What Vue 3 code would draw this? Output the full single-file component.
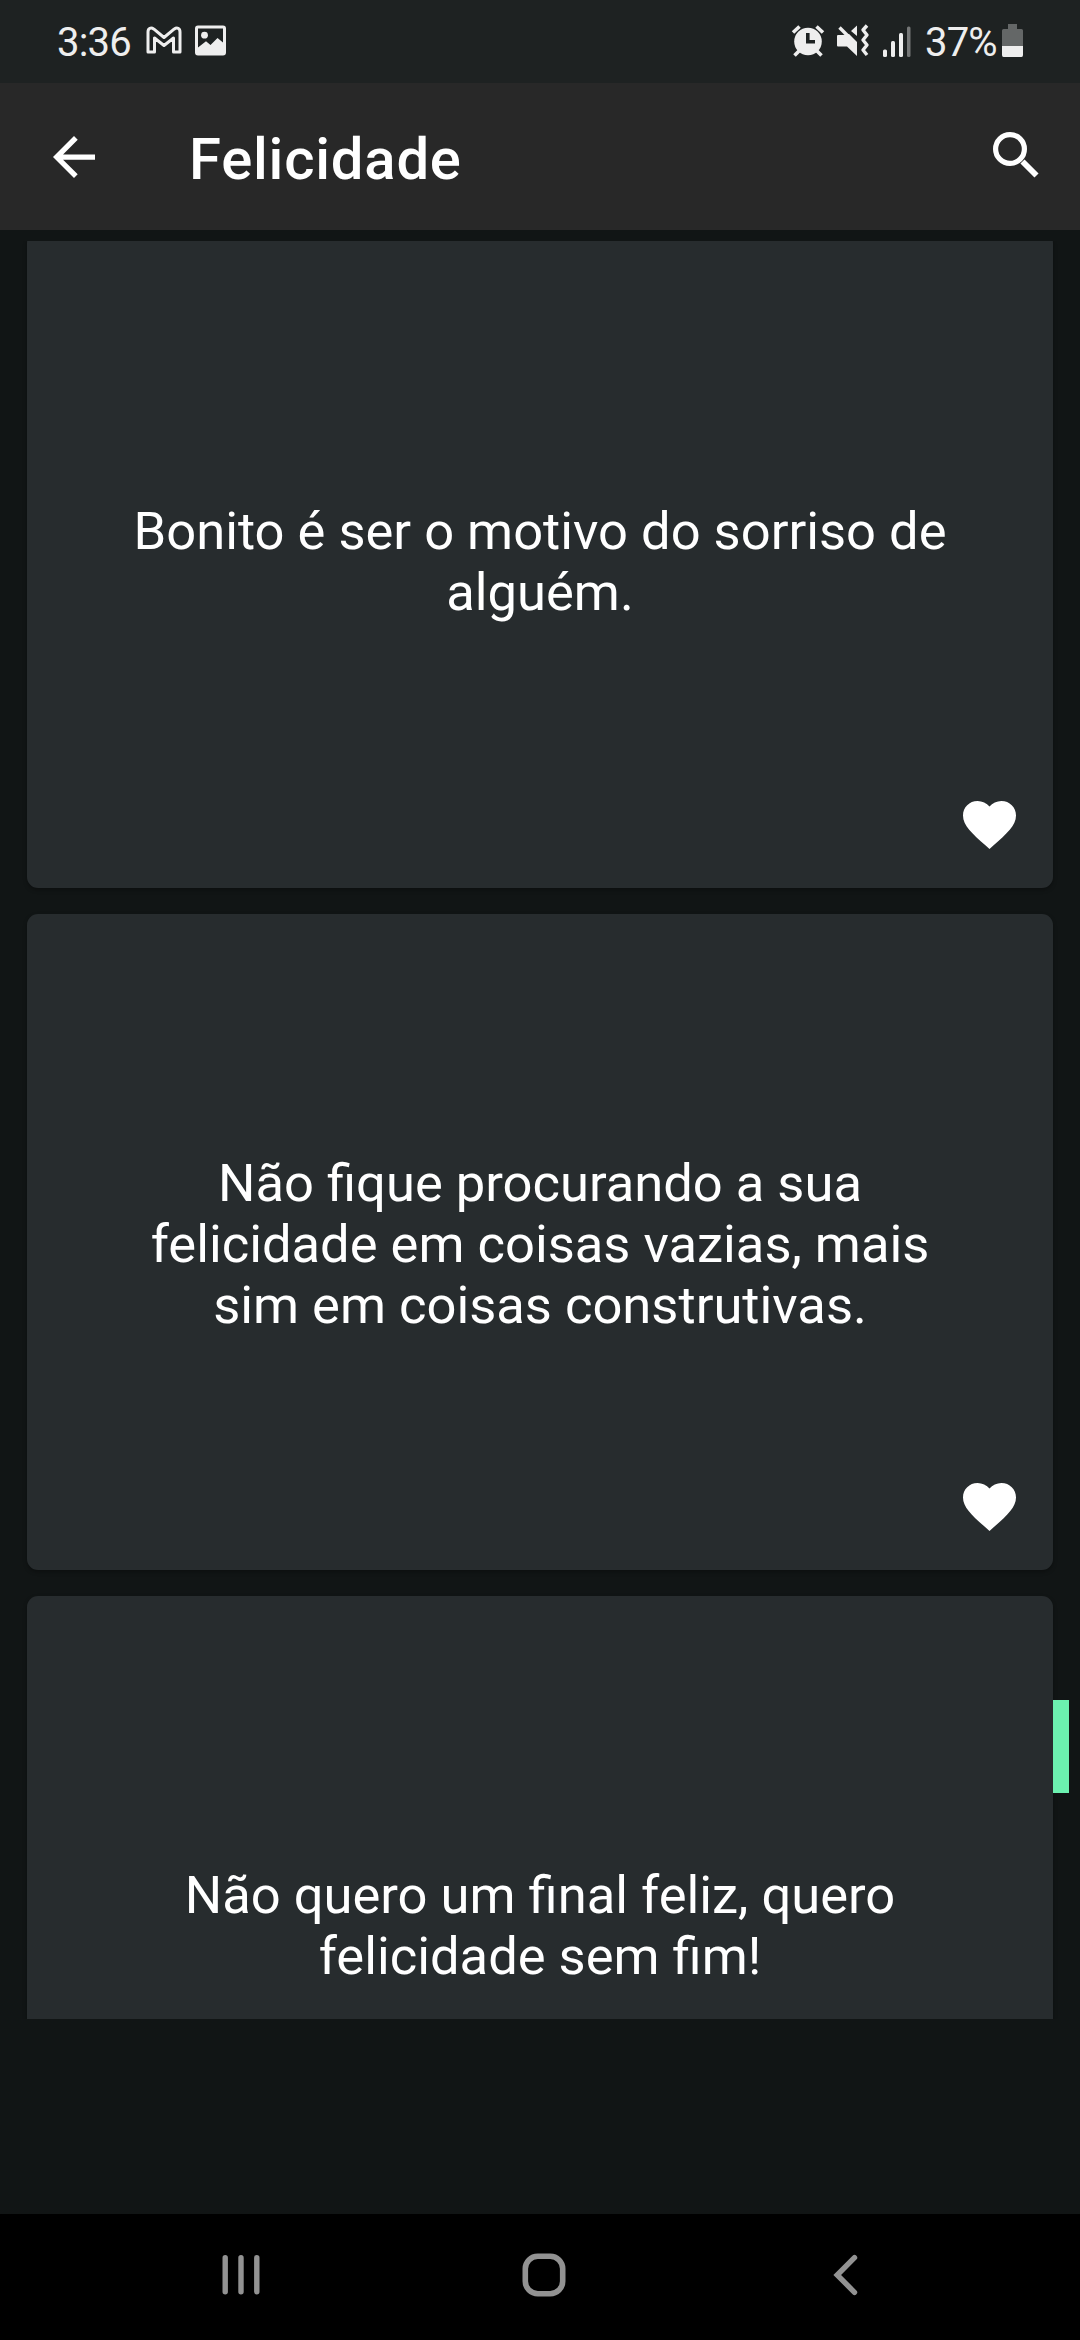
<script setup>
const quotes = [
  'Bonito é ser o motivo do sorriso de alguém.',
  'Não fique procurando a sua felicidade em coisas vazias, mais sim em coisas construtivas.',
  'Não quero um final feliz, quero felicidade sem fim!',
]
</script>

<template>
  <div class="screen">
    <header class="status">
      <div class="status-left">
        <span class="clock">3:36</span>
        <svg class="gmail" width="36" height="28" viewBox="0 0 36 28" fill="none" stroke="#eee" stroke-width="3" stroke-linejoin="round">
          <path d="M2 26V6C2 2 5 1 8 3.2L18 11.5L28 3.2C31 1 34 2 34 6V26H27.5V12L18 19.5L8.5 12V26Z" />
        </svg>
        <svg class="photo" width="32" height="32" viewBox="0 0 32 32">
          <path fill="#eee" fill-rule="evenodd" d="M3 .5H28Q31 .5 31 3.5V27.500Q31 30.500 28 30.500H3Q0 30.500 0 27.500V3.500Q0 .5 3 .5ZM3 3.500V22.500L11 16.300L15.500 20L22.500 13L28 17.500V3.500Z" />
          <circle cx="9.500" cy="10.200" r="3.400" fill="#eee" />
        </svg>
      </div>
      <div class="status-right">
        <svg class="alarm" width="34" height="34" viewBox="0 0 34 34">
          <g stroke="#eee" stroke-width="3.600" fill="none">
            <path d="M2 8.500L8.500 2.500M25.500 2.500L32 8.500M8 27L3.500 31.500M26 27L30.500 31.500" />
          </g>
          <circle cx="17" cy="17.500" r="13.800" fill="#eee" />
          <path d="M16.800 9V17.800H24" fill="none" stroke="#1e2222" stroke-width="3.600" />
        </svg>
        <svg class="mute" width="34" height="34" viewBox="0 0 34 34">
          <path fill="#eee" d="M2 11H7L13 10L21 18V32L11 22.500H2Q1 22.500 1 21.500V12Q1 11 2 11ZM21 1.500V12L15 7Z" />
          <path d="M3.500 3.500L15 15" stroke="#eee" stroke-width="3.400" />
          <path d="M31 1.500L27 6L31 11L27 16L31 21L27 26L31 31" fill="none" stroke="#eee" stroke-width="3.400" stroke-linejoin="round" />
        </svg>
        <svg class="signal" width="28" height="32" viewBox="0 0 28 32" fill="#eee">
          <rect x="0" y="23.500" width="4" height="7.500" rx="1.500" />
          <rect x="8" y="15" width="4" height="16" rx="1.500" />
          <rect x="16" y="7" width="4" height="24" rx="1.500" />
          <rect x="24" y="0.500" width="3.500" height="30.500" rx="1.500" fill="#757777" />
        </svg>
        <span class="percent">37%</span>
        <svg class="battery" width="21" height="33" viewBox="0 0 21 33">
          <path fill="#646767" d="M6 0H15V5H19.500Q21 5 21 6.500V22H0V6.500Q0 5 1.500 5H6Z" />
          <path fill="#eee" d="M0 22H21V31Q21 33 19.500 33H1.500Q0 33 0 31Z" />
        </svg>
      </div>
    </header>

    <div class="appbar">
      <svg class="back" width="42" height="42" viewBox="4 4 16 16" fill="#fff">
        <path d="M20 11H7.830l5.590-5.590L12 4l-8 8 8 8 1.410-1.410L7.830 13H20v-2z" />
      </svg>
      <h1>Felicidade</h1>
      <svg class="search" width="46" height="46" viewBox="0 0 46 46" fill="none" stroke="#fff">
        <circle cx="17" cy="17" r="14.400" stroke-width="5.200" />
        <path d="M29.500 29.500L43.500 43.500" stroke-width="5.800" />
      </svg>
    </div>

    <main>
      <div class="list">
        <article v-for="quote in quotes" :key="quote" class="card">
          <p>{{ quote }}</p>
          <svg class="heart" width="53" height="48" viewBox="2 3 20 18.350" preserveAspectRatio="none" fill="#fff">
            <path d="M12 21.350l-1.450-1.320C5.400 15.360 2 12.280 2 8.500 2 5.420 4.420 3 7.500 3c1.740 0 3.410.810 4.500 2.090C13.090 3.810 14.760 3 16.500 3 19.580 3 22 5.420 22 8.500c0 3.780-3.400 6.860-8.550 11.540L12 21.350z" />
          </svg>
        </article>
      </div>
      <i class="scroll-thumb"></i>
    </main>

    <nav>
      <svg width="38" height="42" viewBox="0 0 38 42" fill="none" stroke="#929292" stroke-width="5.400" stroke-linecap="round">
        <path d="M3.200 3.700V37.700M19 3.700V37.700M34.800 3.700V37.700" />
      </svg>
      <svg class="home" width="44" height="44" viewBox="0 0 44 44" fill="none" stroke="#929292" stroke-width="5.600">
        <rect x="3.300" y="3.300" width="37.400" height="37.400" rx="12.500" />
      </svg>
      <svg width="26" height="42" viewBox="0 0 26 42" fill="none" stroke="#929292" stroke-width="5.400" stroke-linecap="round">
        <path d="M21.500 3.700L4.200 21L21.500 38.300" />
      </svg>
    </nav>
  </div>
</template>

<style>
body {
  margin: 0;
  background: #111515;
}
</style>

<style scoped>
.screen {
  width: 1080px;
  height: 2340px;
  display: flex;
  flex-direction: column;
  overflow: hidden;
  background: #111515;
  color: #fff;
  font-family: Roboto, 'Liberation Sans', sans-serif;
}

svg {
  display: block;
  flex: none;
}

.status {
  height: 83px;
  box-sizing: border-box;
  padding: 0 57px 0 57px;
  display: flex;
  justify-content: space-between;
  align-items: flex-start;
  background: #1e2222;
  color: #eee;
  font-size: 40px;
  line-height: 47px;
  letter-spacing: -0.8px;
}

.status-left,
.status-right {
  display: flex;
  align-items: flex-start;
}

.clock,
.percent {
  margin-top: 19px;
}

.clock {
  width: 89px;
}

.gmail {
  margin-top: 26px;
}

.photo {
  margin: 25px 0 0 13px;
}

.alarm {
  margin: 24px 11px 0 0;
}

.mute {
  margin: 24px 13px 0 0;
}

.signal {
  margin: 26px 14px 0 0;
}

.percent {
  width: 77px;
}

.battery {
  margin-top: 24px;
}

.appbar {
  height: 147px;
  flex: none;
  box-sizing: border-box;
  padding: 0 41px 0 53px;
  display: flex;
  align-items: center;
  background: #282828;
}

.back {
  width: 42px;
  margin-right: 94px;
}

h1 {
  flex: 1;
  margin: 4px 0 0;
  font-size: 58px;
  line-height: 68px;
  font-weight: 500;
  letter-spacing: 0.8px;
}

.search {
  margin-bottom: 3px;
}

main {
  position: relative;
  height: 1778px;
  margin-top: 11px;
  flex: none;
}

.list {
  height: 100%;
  box-sizing: border-box;
  padding: 0 27px;
  display: flex;
  flex-direction: column;
  gap: 26px;
  overflow: hidden;
}

.card {
  position: relative;
  height: 656px;
  flex: none;
  box-sizing: border-box;
  padding: 4px 100px 0;
  display: flex;
  align-items: center;
  justify-content: center;
  border-radius: 11px;
  background: #272c2e;
  box-shadow: 0 2px 4px rgba(0, 0, 0, 0.3);
}

.card:first-child {
  margin-top: -9px;
}

.card p {
  margin: 0;
  font-size: 52.5px;
  line-height: 61px;
  text-align: center;
}

.heart {
  position: absolute;
  right: 37px;
  bottom: 39px;
}

.scroll-thumb {
  position: absolute;
  right: 11px;
  top: 1459px;
  width: 16px;
  height: 93px;
  background: #6cf1b0;
}

nav {
  height: 126px;
  margin-top: auto;
  flex: none;
  box-sizing: border-box;
  padding: 0 221px 5px 222px;
  display: flex;
  align-items: center;
  justify-content: space-between;
  background: #000;
}

.home {
  margin-right: 6px;
}
</style>
